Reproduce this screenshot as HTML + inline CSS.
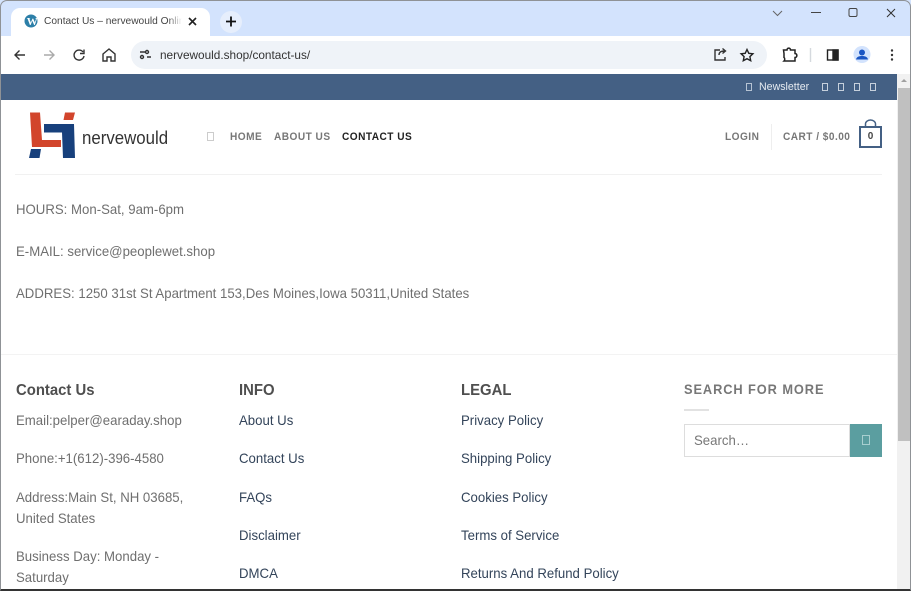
<!DOCTYPE html>
<html><head><meta charset="utf-8">
<style>
html,body{margin:0;padding:0;width:911px;height:591px;overflow:hidden;background:#fff;font-family:"Liberation Sans",sans-serif}
.a{position:absolute;white-space:nowrap}
.t{color:#6f6f6f;font-size:14px;line-height:20px;transform:scaleX(.943);transform-origin:0 0}
.l{color:#33445a;font-size:14px;line-height:20px;transform:scaleX(.943);transform-origin:0 0}
.h{color:#4f4f4f;font-size:16px;font-weight:bold;line-height:20px;transform:scaleX(.93);transform-origin:0 0}
.n{font-size:11px;font-weight:bold;letter-spacing:.5px;color:#777;line-height:14px;transform:scaleX(.92);transform-origin:0 0}
.b{border:1px solid #c9ced3;box-sizing:border-box}
svg{position:absolute;overflow:visible}
</style></head><body>
<div class="a" style="left:0;top:0;width:911px;height:591px;overflow:hidden">
<!-- chrome -->
<div class="a" style="left:0;top:0;width:911px;height:36px;background:#d3e3fd"></div>
<div class="a" style="left:11px;top:8px;width:199px;height:28px;background:#fff;border-radius:9px 9px 0 0"></div>
<div class="a" style="left:0;top:36px;width:911px;height:38px;background:#fff"></div>
<div class="a" style="left:131px;top:41px;width:636px;height:28px;background:#eff3f8;border-radius:14px"></div>
<svg style="left:0;top:0" width="911" height="74" fill="none" stroke="#444" stroke-width="1.4">
<circle cx="31" cy="21" r="6.5" fill="#2c7fa8" stroke="none"/>
<text x="26.800" y="24.8" font-family="Liberation Serif" font-size="11" font-weight="bold" fill="#fff" stroke="none">W</text>
<path d="M189 18l7 7M196 18l-7 7" stroke="#222" stroke-width="1.6"/>
<circle cx="231" cy="22" r="11" fill="#e6eefc" stroke="none"/>
<path d="M226 21.500h10M231 16.500v10" stroke="#111" stroke-width="1.800"/>
<path d="M25 55H15M19.500 50.500L15 55l4.500 4.500" stroke="#333"/>
<path d="M54 55H44M49.500 50.500L54 55l-4.500 4.500" stroke="#aaa"/>
<path d="M83 52a5 5 0 1 0 1 4M84 49.500v4h-4" stroke="#333"/>
<path d="M103 54l6-5 6 5v7h-4v-4h-4v4h-4z" stroke="#333"/>
<path d="M140 52h5M147 57h4" stroke="#333"/>
<circle cx="147" cy="52" r="1.500" stroke="#333"/><circle cx="142" cy="57" r="1.500" stroke="#333"/>
<path d="M720 50h-5v10h10v-3M719 55c0-3 2-4 6-4M722.500 48.500l3 2.500-3 2.500" stroke="#333"/>
<path d="M747 49.500l1.800 3.800 4.100.5-3 2.800.8 4.100-3.700-2-3.700 2 .8-4.100-3-2.800 4.100-.5z" stroke="#222"/>
<path d="M784 50.500h3.500c0-2.500 3.500-2.500 3.500 0h4.500v3.500c2.500 0 2.500 4 0 4v3.500H784.500c1-1 1-3 0-3.500v-4z" stroke="#222" stroke-width="1.500" transform="translate(-.5,-.5)"/>
<path d="M810.500 48v14" stroke="#d5d9de"/>
<rect x="827.500" y="50" width="10.500" height="10" stroke="#222"/><rect x="833" y="50" width="5" height="10" fill="#222" stroke="#222"/>
<circle cx="862" cy="54.500" r="8.500" fill="#d3e3fd" stroke="none"/>
<circle cx="862" cy="52.500" r="3" fill="#1a56c4" stroke="none"/><path d="M856 59.500c.5-3 3.500-3.500 6-3.500s5.500 .5 6 3.500z" fill="#1a56c4" stroke="none"/>
<circle cx="892" cy="50.500" r="1.200" fill="#333" stroke="none"/><circle cx="892" cy="55" r="1.200" fill="#333" stroke="none"/><circle cx="892" cy="59.500" r="1.200" fill="#333" stroke="none"/>
<path d="M773 11l4.500 4.500L782 11" stroke="#666" stroke-width="1"/>
<path d="M811 12.500h10" stroke="#444" stroke-width="1"/>
<rect x="849" y="8.500" width="8" height="8" rx="1.500" stroke="#444" stroke-width="1"/>
<path d="M887 9l8 8M895 9l-8 8" stroke="#333" stroke-width="1"/>
</svg>
<div class="a" style="left:44px;top:15px;font-size:10.200px;line-height:14px;color:#444;width:138px;overflow:hidden">Contact Us – nervewould Online</div>
<div class="a" style="left:168px;top:14px;width:14px;height:14px;background:linear-gradient(90deg,rgba(255,255,255,0),#fff)"></div>
<div class="a" style="left:160px;top:47px;font-size:11.800px;line-height:16px;color:#333">nervewould.shop/contact-us/</div>

<!-- topbar -->
<div class="a" style="left:1px;top:74px;width:896px;height:26px;background:#446084"></div>
<div class="a b" style="left:746px;top:83px;width:6px;height:8px;border-color:#b6c3d3"></div>
<div class="a" style="left:759px;top:80px;font-size:11px;line-height:14px;color:#e6ebf1;transform:scaleX(.965);transform-origin:0 0">Newsletter</div>
<div class="a b" style="left:822px;top:83px;width:6px;height:8px;border-color:#c6d0dc"></div>
<div class="a b" style="left:838px;top:83px;width:6px;height:8px;border-color:#c6d0dc"></div>
<div class="a b" style="left:854px;top:83px;width:6px;height:8px;border-color:#c6d0dc"></div>
<div class="a b" style="left:870px;top:83px;width:6px;height:8px;border-color:#c6d0dc"></div>
<!-- scrollbar -->
<div class="a" style="left:897px;top:74px;width:14px;height:517px;background:#f1f1f1"></div>
<div class="a" style="left:898px;top:88px;width:13px;height:353px;background:#c0c0c0"></div>
<svg style="left:897px;top:76px" width="14" height="10"><path d="M4 6l3-3 3 3z" fill="#a0a0a0"/></svg>

<!-- logo -->
<svg style="left:0;top:0" width="200" height="170">
<path d="M30 112.500H40L42 140H61V147H32Z" fill="#d2452c"/>
<path d="M65 112.500H75L73 120H63.500Z" fill="#d2452c"/>
<path d="M44 124H74L75 158H63L62 132.500H44Z" fill="#17407c"/>
<path d="M31 149H41L39.500 158H29Z" fill="#17407c"/>
</svg>
<div class="a" style="left:82px;top:126px;font-size:18px;line-height:24px;color:#333;transform:scaleX(.935);transform-origin:0 0">nervewould</div>

<!-- nav -->
<div class="a b" style="left:207px;top:132px;width:7px;height:9px;border-color:#ccc"></div>
<div class="a n" style="left:230px;top:129.500px">HOME</div>
<div class="a n" style="left:274px;top:129.500px">ABOUT US</div>
<div class="a n" style="left:342px;top:129.500px;color:#222">CONTACT US</div>
<div class="a n" style="left:725px;top:129.500px">LOGIN</div>
<div class="a" style="left:771px;top:124px;width:1px;height:26px;background:#eee"></div>
<div class="a n" style="left:783px;top:129.500px">CART / $0.00</div>
<div class="a" style="left:859px;top:126px;width:23px;height:22px;box-sizing:border-box;border:2px solid #446084;font-size:10px;font-weight:bold;color:#444;text-align:center;line-height:18px">0</div>
<svg style="left:859px;top:119px" width="23" height="8" fill="none"><path d="M6.500 7.500V5a5 4 0 0 1 10 0v2.500" stroke="#446084" stroke-width="1.500"/></svg>
<div class="a" style="left:15px;top:174px;width:867px;height:1px;background:#f1f1f1"></div>

<!-- content -->
<div class="a t" style="left:16px;top:199px">HOURS: Mon-Sat, 9am-6pm</div>
<div class="a t" style="left:16px;top:241px">E-MAIL: service@peoplewet.shop</div>
<div class="a t" style="left:16px;top:283px">ADDRES: 1250 31st St Apartment 153,Des Moines,Iowa 50311,United States</div>
<div class="a" style="left:1px;top:354px;width:896px;height:1px;background:#f3f3f3"></div>

<!-- footer -->
<div class="a h" style="left:16px;top:381px">Contact Us</div>
<div class="a t" style="left:16px;top:410px">Email:pelper@earaday.shop</div>
<div class="a t" style="left:16px;top:448px">Phone:+1(612)-396-4580</div>
<div class="a t" style="left:16px;top:487px">Address:Main St, NH 03685,</div>
<div class="a t" style="left:16px;top:508px">United States</div>
<div class="a t" style="left:16px;top:546px">Business Day: Monday -</div>
<div class="a t" style="left:16px;top:567px">Saturday</div>

<div class="a h" style="left:239px;top:381px">INFO</div>
<div class="a l" style="left:239px;top:410px">About Us</div>
<div class="a l" style="left:239px;top:448px">Contact Us</div>
<div class="a l" style="left:239px;top:487px">FAQs</div>
<div class="a l" style="left:239px;top:525px">Disclaimer</div>
<div class="a l" style="left:239px;top:563px">DMCA</div>

<div class="a h" style="left:461px;top:381px">LEGAL</div>
<div class="a l" style="left:461px;top:410px">Privacy Policy</div>
<div class="a l" style="left:461px;top:448px">Shipping Policy</div>
<div class="a l" style="left:461px;top:487px">Cookies Policy</div>
<div class="a l" style="left:461px;top:525px">Terms of Service</div>
<div class="a l" style="left:461px;top:563px">Returns And Refund Policy</div>

<div class="a" style="left:684px;top:379px;font-size:14px;font-weight:bold;letter-spacing:1px;line-height:20px;color:#777;transform:scaleX(.915);transform-origin:0 0">SEARCH FOR MORE</div>
<div class="a" style="left:684px;top:409px;width:25px;height:2px;background:#e2e2e2"></div>
<div class="a" style="left:684px;top:424px;width:166px;height:33px;box-sizing:border-box;border:1px solid #ddd"></div>
<div class="a t" style="left:694px;top:430px;color:#777">Search…</div>
<div class="a" style="left:850px;top:424px;width:32px;height:33px;background:#5b9ea0"></div>
<div class="a b" style="left:862px;top:435px;width:8px;height:10px;border-color:#a8cfd0"></div>

<!-- window frame -->
<div class="a" style="left:0;top:0;width:911px;height:591px;box-sizing:border-box;border:1px solid #8f9296;border-bottom:2px solid #333;border-radius:7px 7px 0 0"></div>
</div>
</body></html>
